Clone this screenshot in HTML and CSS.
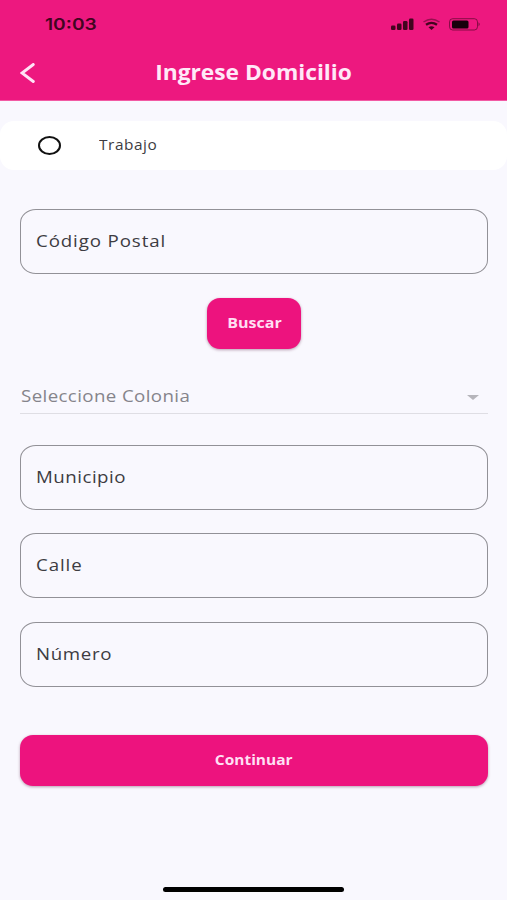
FILE: index.html
```html
<!DOCTYPE html>
<html lang="es">
<head>
<meta charset="utf-8">
<title>Ingrese Domicilio</title>
<link rel="stylesheet" href="styles.css">
</head>
<body>
<header class="header">
  <div class="status">
    <span class="time">10:03</span>
    <svg class="status-icons" width="92" height="14" viewBox="0 0 92 14">
      <g fill="#42051f">
        <rect x="1" y="8.500" width="4.500" height="4.500" rx="1.300"/>
        <rect x="7" y="6.500" width="4.500" height="6.500" rx="1.300"/>
        <rect x="13" y="4" width="4.500" height="9" rx="1.300"/>
        <rect x="19" y="1.500" width="4.500" height="11.500" rx="1.300"/>
      </g>
      <g fill="none" stroke="#42051f">
        <path d="M33.500 5Q41.500 -.5 49.500 5" stroke-width="1.500" opacity=".5"/>
        <path d="M36 7.800Q41.500 4 47 7.800" stroke-width="2.400"/>
        <rect x="59.500" y="1.700" width="28" height="11.300" rx="3.200" stroke-width="1" opacity=".6"/>
      </g>
      <path d="M38.500 10.200Q41.500 8.300 44.500 10.200L41.500 13Z" fill="#42051f"/>
      <rect x="62" y="3.500" width="16.500" height="8" rx="1.500" fill="#19000c"/>
      <path d="M88.500 5.200Q91 7.200 88.500 9.200Z" fill="#42051f" opacity=".6"/>
    </svg>
  </div>
  <div class="titlebar">
    <svg class="back" width="16" height="20" viewBox="0 0 16 20"><path d="M13.300 1.500L2 10L13.300 18.500" fill="none" stroke="#ffe3f6" stroke-width="2.900" stroke-linecap="round"/></svg>
    <h1 class="title">Ingrese Domicilio</h1>
  </div>
</header>
<main>
  <label class="option"><span class="radio"></span><span class="option-text">Trabajo</span></label>
  <form class="form">
    <div class="field"><span class="label code">Código Postal</span></div>
    <button type="button" class="button search"><span class="button-text">Buscar</span></button>
    <div class="select"><span class="label select-text">Seleccione Colonia</span><span class="caret"></span></div>
    <div class="field"><span class="label town">Municipio</span></div>
    <div class="field"><span class="label street">Calle</span></div>
    <div class="field"><span class="label number">Número</span></div>
    <button type="button" class="button continue"><span class="button-text">Continuar</span></button>
  </form>
</main>
<div class="home-indicator"></div>
</body>
</html>
```
FILE: styles.css
```css
* { box-sizing: border-box; }
body {
  margin: 0;
  height: 900px;
  display: flex;
  flex-direction: column;
  overflow: hidden;
  background: #f9f8fe;
  font-family: "Open Sans", "Noto Sans", sans-serif;
  color: #3d3c42;
}
.header { height: 101px; background: #ed187f; border-bottom: 1px solid #f25aa4; }
.status {
  height: 47px;
  padding: 0 25px 0 45px;
  display: flex;
  align-items: center;
  justify-content: space-between;
}
.time {
  font: 600 16px/20px Inter, sans-serif;
  color: #42051f;
  transform: scaleX(1.2);
  transform-origin: left;
}
.titlebar {
  height: 51px;
  display: grid;
  grid-template-columns: 40px 1fr 40px;
  align-items: center;
}
.back { margin-left: 20px; }
.title {
  margin: 0;
  padding-bottom: 2px;
  text-align: center;
  font-size: 20.500px;
  line-height: 28px;
  font-weight: 700;
  color: #ffe9f8;
  transform: scaleX(1.11);
}
.option {
  display: flex;
  align-items: center;
  height: 49px;
  margin-top: 20px;
  padding-left: 38px;
  border-radius: 14px;
  background: #fff;
}
.radio {
  width: 23px;
  height: 19px;
  border: 2px solid #111;
  border-radius: 50%;
}
.option-text {
  margin-left: 38px;
  padding-bottom: 2px;
  font-size: 14px;
  letter-spacing: .5px;
  transform: scaleX(1.1);
  transform-origin: left;
}
.form {
  display: flex;
  flex-direction: column;
  padding: 39px 19px 0 20px;
}
.field {
  height: 65px;
  margin-bottom: 23.400px;
  padding: 0 15px 1.400px;
  display: flex;
  align-items: center;
  border: 1px solid #929197;
  border-radius: 16px / 14px;
}
.label {
  font-size: 17px;
  line-height: 24px;
  letter-spacing: .8px;
  white-space: nowrap;
  transform: scaleX(1.1);
  transform-origin: left;
}
.town { letter-spacing: .45px; }
.number { letter-spacing: .6px; }
.button {
  border: 0;
  padding: 0 0 2px;
  background: #ed137e;
  border-radius: 13px;
  box-shadow: 0 1px 3px rgba(90, 20, 60, .4);
  font: 700 15px/20px "Open Sans", sans-serif;
  color: #ffdff3;
}
.button-text { display: inline-block; transform: scaleX(1.07); }
.search { align-self: center; width: 94px; height: 51px; margin-top: .6px; }
.select {
  display: flex;
  align-items: center;
  justify-content: space-between;
  height: 34px;
  margin: 31px 0 31.100px;
  padding: 0 9px 0 1px;
  border-bottom: 1px solid #dfdee4;
}
.select-text { color: #85848b; letter-spacing: .35px; }
.caret {
  margin-top: 2px;
  border: 6px solid transparent;
  border-top: 5px solid #b6b5bb;
  border-bottom: 0;
}
.continue { height: 51px; margin-top: 24.500px; padding-bottom: 3px; }
.continue .button-text { transform: scaleX(1.03); }
.home-indicator {
  width: 181px;
  height: 5px;
  margin: auto auto 8px;
  border-radius: 3px;
  background: #000;
}
```
